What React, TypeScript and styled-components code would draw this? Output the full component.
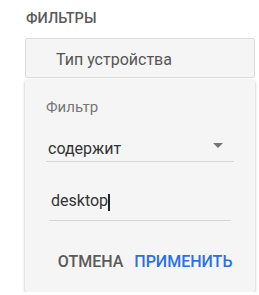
import React from "react";
import styled, { createGlobalStyle } from "styled-components";

const Global = createGlobalStyle`
  html, body { margin: 0; padding: 0; background: #fff; }
  body { font-family: Roboto, "Noto Sans", Arial, sans-serif; }
`;

const Page = styled.div`
  padding: 0 0 0 25px;
  width: 230px;
`;

const Title = styled.div`
  font-size: 14.5px;
  font-weight: 500;
  color: #5a5a5a;
  line-height: 16px;
  padding: 11px 0 0 1px;
  height: 38px;
  box-sizing: border-box;
`;

const Chip = styled.div`
  box-sizing: border-box;
  height: 40px;
  border: 1px solid #dcdcdc;
  border-radius: 2px;
  background: #f5f5f5;
  display: flex;
  align-items: center;
  padding: 3px 0 0 30px;
  font-size: 16px;
  color: #555;
`;

const Panel = styled.div`
  margin-top: 2px;
  height: 212px;
  background: #f5f5f5;
  box-shadow: 0 1px 3px rgba(0, 0, 0, 0.3);
  border-radius: 2px;
  box-sizing: border-box;
  padding: 17px 21px 0 21px;
  display: flex;
  flex-direction: column;
  align-items: flex-start;
`;

const Label = styled.div`
  font-size: 15px;
  color: #777;
  line-height: 20px;
`;

const Select = styled.div`
  margin-top: 21.5px;
  width: 188px;
  box-sizing: border-box;
  line-height: 20px;
  padding: 0 0 2px 2px;
  border-bottom: 1px solid #d6d6d6;
  display: flex;
  align-items: center;
  justify-content: space-between;
  font-size: 16px;
  color: #333;
`;

const Arrow = styled.span`
  width: 0;
  height: 0;
  border-left: 5px solid transparent;
  border-right: 5px solid transparent;
  border-top: 5px solid #757575;
  margin: 0 11px 6px 0;
`;

const InputRow = styled.div`
  margin: 29.5px 0 0 3px;
  width: 182px;
  box-sizing: border-box;
  line-height: 20px;
  padding: 0 0 8.5px 2px;
  border-bottom: 1px solid #d6d6d6;
  display: flex;
  align-items: center;
  font-size: 16px;
  color: #333;
`;

const Caret = styled.span`
  display: inline-block;
  width: 2px;
  height: 17px;
  background: #222;
  margin-top: 2px;
`;

const Actions = styled.div`
  margin-top: 31.5px;
  align-self: stretch;
  display: flex;
  justify-content: flex-end;
  gap: 11px;
  padding-right: 1.5px;
`;

const Button = styled.span<{ $primary?: boolean }>`
  font-size: 16px;
  font-weight: 500;
  color: ${(p) => (p.$primary ? "#2a6fe6" : "#5a5a5a")};
  line-height: 20px;
`;

export default function App() {
  return (
    <>
      <Global />
      <Page>
        <Title>ФИЛЬТРЫ</Title>
        <Chip>Тип устройства</Chip>
        <Panel>
          <Label>Фильтр</Label>
          <Select>
            <span>содержит</span>
            <Arrow />
          </Select>
          <InputRow>
            desktop
            <Caret />
          </InputRow>
          <Actions>
            <Button>ОТМЕНА</Button>
            <Button $primary>ПРИМЕНИТЬ</Button>
          </Actions>
        </Panel>
      </Page>
    </>
  );
}
